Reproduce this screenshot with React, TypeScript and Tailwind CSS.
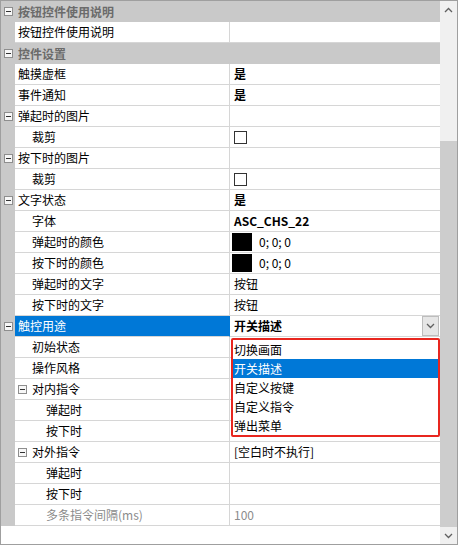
import type { ReactNode } from 'react';

type Row =
  | { kind: 'cat'; label: string }
  | {
      kind: 'item';
      label: string;
      level: 0 | 1 | 2;
      expander?: 'gutter' | 'inline';
      value?: ReactNode;
      bold?: boolean;
      muted?: boolean;
      selected?: boolean;
    };

const Checkbox = () => <span className="block w-[13px] h-[13px] border border-[#333] bg-white" />;

const ColorValue = () => (
  <span className="flex items-center">
    <span className="block w-[20px] h-[18px] bg-black -ml-[2px]" />
    <span className="ml-[7px]">0; 0; 0</span>
  </span>
);

const rows: Row[] = [
  { kind: 'cat', label: '按钮控件使用说明' },
  { kind: 'item', label: '按钮控件使用说明', level: 0 },
  { kind: 'cat', label: '控件设置' },
  { kind: 'item', label: '触摸虚框', level: 0, value: '是', bold: true },
  { kind: 'item', label: '事件通知', level: 0, value: '是', bold: true },
  { kind: 'item', label: '弹起时的图片', level: 0, expander: 'gutter' },
  { kind: 'item', label: '裁剪', level: 1, value: <Checkbox /> },
  { kind: 'item', label: '按下时的图片', level: 0, expander: 'gutter' },
  { kind: 'item', label: '裁剪', level: 1, value: <Checkbox /> },
  { kind: 'item', label: '文字状态', level: 0, expander: 'gutter', value: '是', bold: true },
  { kind: 'item', label: '字体', level: 1, value: 'ASC_CHS_22', bold: true },
  { kind: 'item', label: '弹起时的颜色', level: 1, value: <ColorValue /> },
  { kind: 'item', label: '按下时的颜色', level: 1, value: <ColorValue /> },
  { kind: 'item', label: '弹起时的文字', level: 1, value: '按钮' },
  { kind: 'item', label: '按下时的文字', level: 1, value: '按钮' },
  { kind: 'item', label: '触控用途', level: 0, expander: 'gutter', value: '开关描述', bold: true, selected: true },
  { kind: 'item', label: '初始状态', level: 1 },
  { kind: 'item', label: '操作风格', level: 1 },
  { kind: 'item', label: '对内指令', level: 1, expander: 'inline' },
  { kind: 'item', label: '弹起时', level: 2 },
  { kind: 'item', label: '按下时', level: 2 },
  { kind: 'item', label: '对外指令', level: 1, expander: 'inline', value: '[空白时不执行]' },
  { kind: 'item', label: '弹起时', level: 2 },
  { kind: 'item', label: '按下时', level: 2 },
  { kind: 'item', label: '多条指令间隔(ms)', level: 2, value: '100', muted: true },
];

const options = ['切换画面', '开关描述', '自定义按键', '自定义指令', '弹出菜单'];

function Minus() {
  return (
    <span className="flex items-center justify-center w-[9px] h-[9px] border border-[#8e8e8e] bg-[#f7f7f7] shrink-0">
      <span className="block w-[5px] h-px bg-[#333]" />
    </span>
  );
}

function Chevron({ up }: { up?: boolean }) {
  return (
    <svg width="9" height="6" viewBox="0 0 9 6" fill="none" stroke="#606060" strokeWidth="1.3">
      {up ? <path d="M1 5 L4.5 1.5 L8 5" /> : <path d="M1 1 L4.5 4.5 L8 1" />}
    </svg>
  );
}

function PropRow({ row }: { row: Row }) {
  if (row.kind === 'cat') {
    return (
      <div className="flex h-[21px] bg-[#c9c9c9] items-center">
        <div className="w-[14px] flex justify-center pl-px">
          <Minus />
        </div>
        <span className="pl-[3px] font-bold text-[#6b6b6b] leading-[20px]">{row.label}</span>
      </div>
    );
  }
  const indent = row.level === 0 ? 'pl-[3px]' : row.level === 1 ? 'pl-[17px]' : 'pl-[31px]';
  return (
    <div className="flex h-[21px]">
      <div className="w-[14px] bg-[#c9c9c9] flex items-center justify-center pl-px">
        {row.expander === 'gutter' && <Minus />}
      </div>
      <div
        className={`w-[215px] flex items-center border-r border-b border-[#d6d6d6] leading-[20px] ${
          row.selected ? 'bg-[#0078d7] text-white border-r-[#0078d7]' : row.muted ? 'text-[#8c8c8c]' : 'text-black'
        } ${row.expander === 'inline' ? 'pl-[3px]' : indent}`}
      >
        {row.expander === 'inline' && (
          <span className="mr-[5px]">
            <Minus />
          </span>
        )}
        <span className="whitespace-nowrap">{row.label}</span>
      </div>
      <div
        className={`flex-1 flex items-center border-b border-[#d6d6d6] pl-[4px] leading-[20px] ${
          row.bold ? 'font-bold' : ''
        } ${row.muted ? 'text-[#8c8c8c]' : 'text-black'}`}
      >
        <span className="flex-1 whitespace-nowrap">{row.value}</span>
        {row.selected && (
          <span className="w-[17px] h-[20px] flex items-center justify-center bg-[#e6e6e6] border border-[#bdbdbd] mr-px">
            <Chevron />
          </span>
        )}
      </div>
    </div>
  );
}

export default function App() {
  return (
    <div
      className="w-[458px] h-[545px] border border-[#9f9f9f] bg-white flex text-[12px]"
      style={{ fontFamily: '"Noto Sans CJK SC", "Noto Sans", sans-serif' }}
    >
      <div className="flex-1 relative flex flex-col">
        {rows.map((r, i) => (
          <PropRow key={i} row={r} />
        ))}

        <div className="absolute left-[230px] top-[337px] w-[209px] border-2 border-[#e8261f] rounded-[2px] bg-white">
          {options.map((o) => (
            <div
              key={o}
              className={`h-[19px] pl-[1px] flex items-center leading-[19px] ${
                o === '开关描述' ? 'bg-[#0078d7] text-white' : 'text-black'
              }`}
            >
              {o}
            </div>
          ))}
        </div>
      </div>

      <div className="w-[17px] bg-[#f0f0f0] flex flex-col">
        <div className="h-[17px] flex items-center justify-center">
          <Chevron up />
        </div>
        <div className="flex-1 flex flex-col pt-[123px]">
          <div className="flex-1 bg-[#cdcdcd]" />
        </div>
        <div className="h-[17px] flex items-center justify-center">
          <Chevron />
        </div>
      </div>
    </div>
  );
}
